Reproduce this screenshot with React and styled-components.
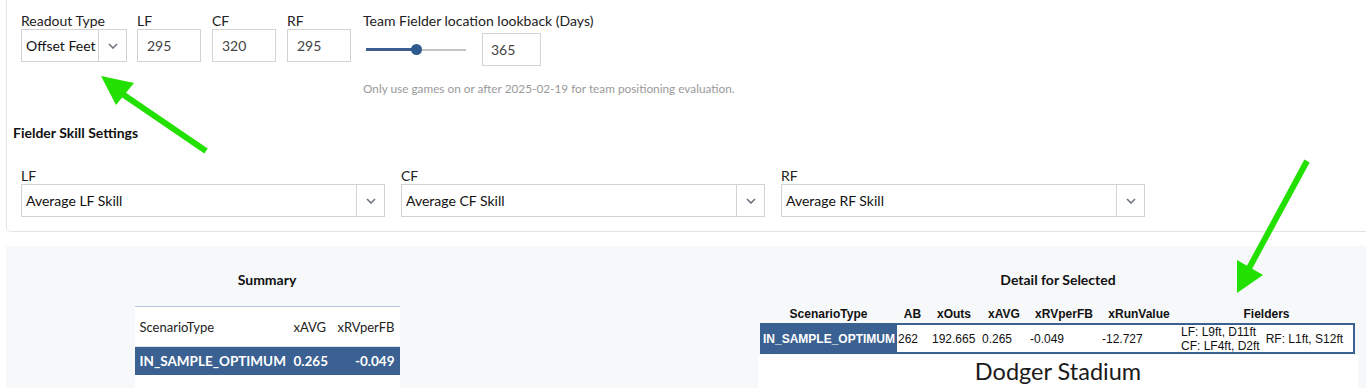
import styled, { createGlobalStyle } from "styled-components";

const Global = createGlobalStyle`
  body {
    margin: 0;
    background: #fff;
    font-family: Lato, "Open Sans", sans-serif;
    color: #222;
  }
`;

const Page = styled.div`
  position: relative;
  width: 1366px;
  height: 388px;
  overflow: hidden;
`;

const Card = styled.div`
  margin-left: 6px;
  border-left: 1px solid #e4e4e4;
  border-bottom: 1px solid #e4e4e4;
  border-bottom-left-radius: 5px;
  padding: 13px 0 14px 6px;
`;

const TopRow = styled.div`
  display: flex;
  align-items: flex-start;
  padding-left: 8px;
`;

const Field = styled.div`
  display: flex;
  flex-direction: column;
  margin-right: ${(p) => p.gap || 0}px;
`;

const Label = styled.div`
  font-size: 14px;
  line-height: 16px;
  color: #222;
  white-space: nowrap;
`;

const SelectBox = styled.div`
  display: flex;
  width: ${(p) => p.w}px;
  height: 33px;
  box-sizing: border-box;
  border: 1px solid #d3d3d3;
  background: #fff;
`;

const SelectValue = styled.div`
  flex: 1;
  display: flex;
  align-items: center;
  padding-left: 4px;
  font-size: 14px;
  color: #111;
  white-space: nowrap;
  overflow: hidden;
`;

const Caret = styled.div`
  width: 27px;
  border-left: 1px solid #d3d3d3;
  display: flex;
  align-items: center;
  justify-content: center;
`;

const NumInput = styled.div`
  width: ${(p) => p.w || 64}px;
  height: ${(p) => p.h || 33}px;
  box-sizing: border-box;
  border: 1px solid #d3d3d3;
  padding-left: ${(p) => p.pad || 9}px;
  display: flex;
  align-items: center;
  font-size: 14px;
  color: #444;
`;

const SliderRow = styled.div`
  display: flex;
  align-items: center;
  margin-top: 4px;
`;

const Track = styled.div`
  position: relative;
  width: 100px;
  height: 2px;
  margin: 0 16px 0 3px;
  background: #c4c4c4;
`;

const TrackFill = styled.div`
  height: 3px;
  margin-top: -0.5px;
  background: #3c5f8f;
`;

const Thumb = styled.div`
  position: absolute;
  top: 50%;
  width: 11px;
  height: 11px;
  margin: -5.5px 0 0 -5.5px;
  border-radius: 50%;
  background: #2f5a8e;
`;

const Help = styled.div`
  margin-top: 16px;
  font-size: 11.8px;
  line-height: 14px;
  color: #9a9a9a;
  white-space: nowrap;
`;

const SectionTitle = styled.div`
  margin-top: 28px;
  font-size: 14px;
  line-height: 17px;
  font-weight: 700;
  color: #111;
`;

const SkillRow = styled.div`
  display: grid;
  grid-template-columns: repeat(3, 364px);
  column-gap: 16px;
  margin-top: 27px;
  padding-left: 8px;
`;

const Results = styled.div`
  margin: 14px 0 0 6px;
  background: #f7f8fa;
  display: grid;
  grid-template-columns: 522px 600px;
  column-gap: 230px;
  padding-top: 25px;
  height: 200px;
`;

const Column = styled.div`
  display: flex;
  flex-direction: column;
  align-items: center;
`;

const Heading = styled.div`
  font-size: 14px;
  line-height: 17px;
  font-weight: 700;
  color: #111;
`;

const SummaryTable = styled.table`
  margin-top: 18px;
  width: 265px;
  border-collapse: collapse;
  table-layout: fixed;
  background: #fff;
  border-top: 1px solid #b3c8de;
  font-size: 13px;
`;

const STh = styled.th`
  box-sizing: border-box;
  width: ${(p) => p.w}px;
  height: 40px;
  padding: 0 ${(p) => p.pr || 5}px 0 ${(p) => p.pl || 5}px;
  font-weight: 400;
  text-align: ${(p) => p.align || "left"};
  color: #222;
  border-bottom: 1px solid #dde3ea;
  white-space: nowrap;
`;

const STd = styled.td`
  height: 28px;
  padding: 0 ${(p) => p.pr || 5}px 0 ${(p) => p.pl || 5}px;
  background: ${(p) => (p.selected ? "#3a6191" : "#fff")};
  color: ${(p) => (p.selected ? "#fff" : "#222")};
  font-size: 13.5px;
  font-weight: 700;
  text-align: ${(p) => p.align || "left"};
  white-space: nowrap;
  overflow: hidden;
`;

const DetailTable = styled.table`
  margin-top: 17px;
  margin-left: 2px;
  align-self: flex-start;
  width: 595px;
  border-collapse: collapse;
  table-layout: fixed;
  font-family: "Liberation Sans", Arial, sans-serif;
  font-size: 12px;
`;

const DTh = styled.th`
  width: ${(p) => p.w}px;
  height: 18px;
  padding: 0;
  font-weight: 700;
  text-align: center;
  color: #111;
  white-space: nowrap;
`;

const DRow = styled.tr`
  outline: 2px solid #3a6191;
  outline-offset: -2px;
  background: #fff;
`;

const DTd = styled.td`
  height: 31px;
  padding: 0 0 0 ${(p) => p.pl ?? 3}px;
  background: ${(p) => (p.selected ? "#3a6191" : "transparent")};
  color: ${(p) => (p.selected ? "#fff" : "#111")};
  font-weight: ${(p) => (p.selected ? 700 : 400)};
  white-space: nowrap;
  overflow: hidden;
`;

const Fielders = styled.div`
  display: flex;
  align-items: center;
  gap: 6px;
  line-height: 14px;
`;

const Stadium = styled.div`
  align-self: stretch;
  margin-top: 1px;
  background: #fff;
  text-align: center;
  font-size: 23.5px;
  line-height: 32px;
  color: #1a1a1a;
  height: 60px;
`;

const Overlay = styled.svg`
  position: absolute;
  left: 0;
  top: 0;
  pointer-events: none;
`;

function Chevron() {
  return (
    <svg width="10" height="6" viewBox="0 0 10 6">
      <polyline points="1,1 5,5 9,1" fill="none" stroke="#6f7680" strokeWidth="1.6" />
    </svg>
  );
}

function Select({ w, value }) {
  return (
    <SelectBox w={w}>
      <SelectValue>{value}</SelectValue>
      <Caret>
        <Chevron />
      </Caret>
    </SelectBox>
  );
}

const skills = [
  ["LF", "Average LF Skill"],
  ["CF", "Average CF Skill"],
  ["RF", "Average RF Skill"],
];

const walls = [
  ["LF", "295", 11],
  ["CF", "320", 11],
  ["RF", "295", 12],
];

export default function App() {
  return (
    <Page>
      <Global />
      <Card>
        <TopRow>
          <Field gap={10}>
            <Label>Readout Type</Label>
            <Select w={106} value="Offset Feet" />
          </Field>
          {walls.map(([name, val, gap]) => (
            <Field key={name} gap={gap}>
              <Label>{name}</Label>
              <NumInput>{val}</NumInput>
            </Field>
          ))}
          <Field>
            <Label>Team Fielder location lookback (Days)</Label>
            <SliderRow>
              <Track>
                <TrackFill style={{ width: "50%" }} />
                <Thumb style={{ left: "50%" }} />
              </Track>
              <NumInput w={59} pad={8}>365</NumInput>
            </SliderRow>
            <Help>Only use games on or after 2025-02-19 for team positioning evaluation.</Help>
          </Field>
        </TopRow>
        <SectionTitle>Fielder Skill Settings</SectionTitle>
        <SkillRow>
          {skills.map(([name, val]) => (
            <Field key={name}>
              <Label>{name}</Label>
              <Select w={364} value={val} />
            </Field>
          ))}
        </SkillRow>
      </Card>

      <Results>
        <Column>
          <Heading>Summary</Heading>
          <SummaryTable>
            <thead>
              <tr>
                <STh w={154}>ScenarioType</STh>
                <STh w={44}>xAVG</STh>
                <STh w={67} align="right" pr={7}>xRVperFB</STh>
              </tr>
            </thead>
            <tbody>
              <tr>
                <STd selected>IN_SAMPLE_OPTIMUM</STd>
                <STd selected>0.265</STd>
                <STd selected align="right">-0.049</STd>
              </tr>
              <tr>
                <STd pl={12}>&nbsp;</STd>
                <STd />
                <STd />
              </tr>
            </tbody>
          </SummaryTable>
        </Column>

        <Column>
          <Heading>Detail for Selected</Heading>
          <DetailTable>
            <thead>
              <tr>
                <DTh w={137}>ScenarioType</DTh>
                <DTh w={31}>AB</DTh>
                <DTh w={52}>xOuts</DTh>
                <DTh w={48}>xAVG</DTh>
                <DTh w={72}>xRVperFB</DTh>
                <DTh w={78}>xRunValue</DTh>
                <DTh w={177}>Fielders</DTh>
              </tr>
            </thead>
            <tbody>
              <DRow>
                <DTd selected>IN_SAMPLE_OPTIMUM</DTd>
                <DTd pl={1}>262</DTd>
                <DTd pl={4}>192.665</DTd>
                <DTd pl={2}>0.265</DTd>
                <DTd pl={2}>-0.049</DTd>
                <DTd pl={2}>-12.727</DTd>
                <DTd>
                  <Fielders>
                    <div>
                      LF: L9ft, D11ft
                      <br />
                      CF: LF4ft, D2ft
                    </div>
                    <div>RF: L1ft, S12ft</div>
                  </Fielders>
                </DTd>
              </DRow>
            </tbody>
          </DetailTable>
          <Stadium>Dodger Stadium</Stadium>
        </Column>
      </Results>

      <Overlay width="1366" height="388" viewBox="0 0 1366 388">
        <line x1="206" y1="151" x2="118" y2="91" stroke="#22e000" strokeWidth="6" />
        <polygon points="101,76 134,83 116,105" fill="#22e000" />
        <line x1="1307" y1="161" x2="1247" y2="272" stroke="#22e000" strokeWidth="6" />
        <polygon points="1237,293 1237,260 1263,275" fill="#22e000" />
      </Overlay>
    </Page>
  );
}
